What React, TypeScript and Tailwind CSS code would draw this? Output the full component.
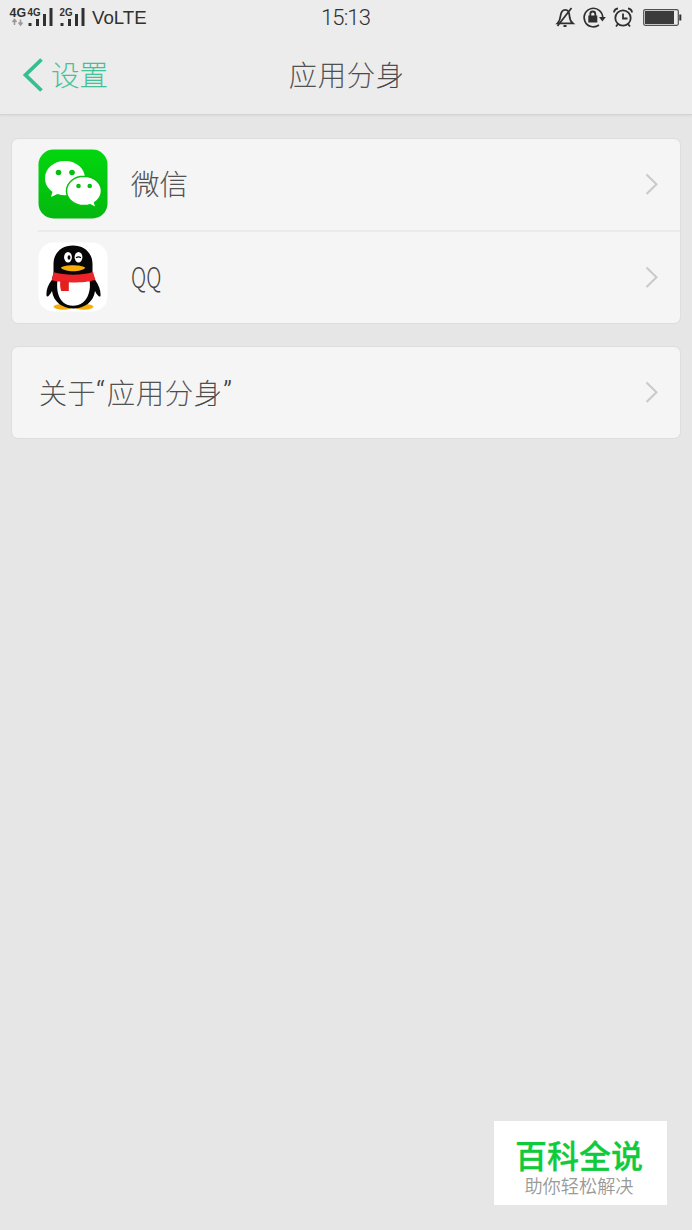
import type { ReactNode } from 'react';

const CJK = "font-['Noto_Sans_CJK_SC',sans-serif]";

function SignalIcons() {
  return (
    <svg className="h-9 w-[90px] shrink-0" viewBox="0 0 90 36" fill="#303030">
      <g className="font-['Liberation_Sans',sans-serif] font-bold">
        <text x="9.5" y="17" fontSize="12" textLength="16.500" lengthAdjust="spacingAndGlyphs">4G</text>
        <text x="27.5" y="16" fontSize="10" textLength="13" lengthAdjust="spacingAndGlyphs">4G</text>
        <text x="59.5" y="16" fontSize="10" textLength="13" lengthAdjust="spacingAndGlyphs">2G</text>
      </g>
      <path d="M14.500 25v-5M12.500 22l2-2.500 2 2.500M20.500 19.500v5M18.500 22.500l2 2.500 2-2.500" fill="none" stroke="#999" strokeWidth="1.5" />
      <path d="M28.500 23h3v3h-3zM36 19h3v7h-3zM43 14h3v12h-3zM49.500 8h3v18h-3z" />
      <path d="M60.500 23h3v3h-3zM68 19h3v7h-3zM75 14h3v12h-3zM81.500 8h3v18h-3z" />
    </svg>
  );
}

function SystemIcons() {
  return (
    <svg className="h-9 w-[140px] shrink-0" viewBox="552 0 140 36" fill="none" stroke="#303030" strokeWidth="1.8">
      <path d="M557.500 23.300c2-2 2.700-4 3-7.300.5-4 2-6.200 4.800-6.200s4 2.200 4.200 6.200c.2 3.300.8 5.300 3.300 7.300zM557.500 26 571.500 8M563.500 26h3" />
      <path d="M599 25a9.300 9.300 0 1 1 3.700-7" strokeWidth="1.600" />
      <path d="M599 17h6.800l-3.400 4.500z" fill="#303030" stroke="none" />
      <path d="M588.300 15.500h9v7h-9z" fill="#303030" stroke="none" />
      <path d="M590.300 16.500v-2.500a2.500 2.500 0 0 1 5 0v2.500" />
      <circle cx="623" cy="18" r="7.700" />
      <path d="M623 13.500V18.500h4.500M614 12.500c.2-2.300 1.800-3.800 4-4M632 12.500c-.2-2.300-1.800-3.800-4-4M618 24l-2 2.500M628 24l2 2.500" />
      <rect x="643.700" y="9.700" width="34.600" height="15.600" rx="1.500" strokeWidth="1.200" stroke="#505050" />
      <path d="M645 11h29v13h-29z" fill="#3b3b3b" stroke="none" />
      <path d="M679.300 14.500h2v6h-2z" fill="#303030" stroke="none" />
    </svg>
  );
}

function WeChatIcon() {
  return (
    <svg className="size-[70px] shrink-0" viewBox="0 0 70 70">
      <defs>
        <linearGradient id="wechat" x1="0" y1="0" x2="0" y2="1">
          <stop offset="0" stopColor="#02d70e" />
          <stop offset="1" stopColor="#04b80f" />
        </linearGradient>
      </defs>
      <rect x=".5" y=".5" width="69" height="69" rx="15" fill="url(#wechat)" />
      <path d="M27 12C15.500 12 7 19.500 7 29.300c0 5.700 2.700 10.100 7.500 13.500L13 48l6.500-3c2.500.8 5 1.200 7.500 1.200 11.500 0 20-7.500 20-17S38.500 12 27 12z" fill="#fff" />
      <path d="M46 27.200c-9.700 0-17.500 6.600-17.500 14.700s7.800 14.700 17.500 14.700c2.300 0 4.200-.3 6.200-.9l6.100 3.100-1.700-5.100c4-3 6.900-7 6.900-11.800 0-8.100-7.800-14.700-17.500-14.700z" fill="#fff" stroke="#05c20f" strokeWidth="1.500" />
      <g fill="#05c10f">
        <circle cx="20.500" cy="23.500" r="2.800" />
        <circle cx="34" cy="23.500" r="2.800" />
        <circle cx="40.500" cy="37" r="2.300" />
        <circle cx="51.700" cy="37" r="2.300" />
      </g>
    </svg>
  );
}

function QQIcon() {
  return (
    <svg className="size-[70px] shrink-0" viewBox="0 0 70 70">
      <rect x=".5" y=".5" width="69" height="69" rx="15" fill="#fff" />
      <ellipse cx="25" cy="64.800" rx="9.500" ry="2.900" fill="#f5ad0c" />
      <ellipse cx="46" cy="64.800" rx="9.500" ry="2.900" fill="#f5ad0c" />
      <path d="M15.500 31V22C15.500 11 23.500 3.500 34.900 3.500S54.500 11 54.500 22v9l2.700 7c4 6 5.800 11 5.300 16-.8 1.500-3.300-.3-5.500-5C55.500 60 46.500 66.500 35.500 66.500S15.500 60 14 49c-2.200 4.500-4.700 6.500-5.400 5-.8-5 1.200-11 5.200-16z" fill="#060606" />
      <path d="M19.500 38h32c.8 5 .5 10-1 14-2.500 7.500-8 11.800-15.500 11.800S22.500 59.500 20.200 52c-1.200-4-1.300-9-.7-14z" fill="#fff" />
      <path d="M15.500 30.300c6 1.700 12.500 2.400 19.500 2.400 7.500 0 14.500-.9 20-2.700l2.400 7.900c-7 1.800-13.400 2.400-22.400 2.500-8 0-15.500-.6-21.200-2.100z" fill="#ec2328" />
      <path d="M22.300 38.500h8.500V49h-7.700c-1-3.500-1.200-7-.8-10.500z" fill="#e3201f" />
      <ellipse cx="30" cy="15.200" rx="3.900" ry="5.300" fill="#fff" />
      <ellipse cx="40.500" cy="15.200" rx="3.900" ry="5.300" fill="#fff" />
      <ellipse cx="31" cy="15.500" rx="1.400" ry="2.300" fill="#060606" />
      <path d="M38 15.700q2.500-1.700 5 0" fill="none" stroke="#060606" strokeWidth="1.300" />
      <path d="M22.800 25.800c2.500-3.400 21.500-3.400 24.500 0-3 4.600-21 4.600-24.500 0z" fill="#f5ad0c" />
    </svg>
  );
}

function Chevron() {
  return (
    <svg className="ml-auto mr-[21px] h-6 w-3.5 shrink-0" viewBox="0 0 14 24" fill="none" stroke="#c9c9c9" strokeWidth="2">
      <path d="m1.500 2.500 10 9.800-10 9.700" />
    </svg>
  );
}

function Card({ children }: { children: ReactNode }) {
  return <section className="rounded-[6px] bg-[#f5f5f5] shadow-[0_0_0_1px_#dedede]">{children}</section>;
}

export default function App() {
  return (
    <div className={`flex h-[1230px] w-[692px] flex-col overflow-hidden bg-[#e6e6e6] text-[#444] ${CJK}`}>
      <header className="h-[115px] shrink-0 border-b border-[#d4d4d4] bg-[#ececec] shadow-[0_1px_2px_#d9d9d9]">
        <div className="grid h-9 grid-cols-[1fr_auto_1fr] items-center font-['Roboto',sans-serif] leading-9 text-[#303030]">
          <div className="flex items-center">
            <SignalIcons />
            <span className="ml-0.5 font-['Liberation_Sans',sans-serif] text-[18.7px] leading-9">VoLTE</span>
          </div>
          <time className="pr-px text-[22px] font-light tracking-[-0.9px]">15:13</time>
          <div className="flex justify-end"><SystemIcons /></div>
        </div>
        <div className="grid h-[78px] grid-cols-[1fr_auto_1fr] items-center leading-none">
          <div className="flex items-center pl-[22px] text-[#35bf91]">
            <svg className="h-9 w-[22px]" viewBox="0 0 22 36" fill="none" stroke="currentColor" strokeWidth="3.800">
              <path d="M19.500 2.500 3.500 18l16 15.500" />
            </svg>
            <span className="ml-[7px] pb-0.5 text-[28.5px] font-thin [-webkit-text-stroke:0.35px_currentColor]">设置</span>
          </div>
          <h1 className="pb-0.5 pl-0.5 text-[28px] font-thin tracking-[1px] [-webkit-text-stroke:0.35px_currentColor]">应用分身</h1>
          <span />
        </div>
      </header>

      <main className="flex flex-col gap-6 px-3 pt-6">
        <Card>
          <div className="flex h-[91px] items-center pb-0.5 pl-[26px]">
            <WeChatIcon />
            <span className="ml-[23px] text-[28.5px] font-thin leading-none [-webkit-text-stroke:0.35px_currentColor]">微信</span>
            <Chevron />
          </div>
          <div className="ml-[26px] h-0.5 bg-[#ebebeb]" />
          <div className="flex h-[91px] items-center pb-0.5 pl-[26px]">
            <QQIcon />
            <span className="ml-[23px] origin-left scale-x-[0.72] pb-[3px] text-[29px] font-light leading-none">QQ</span>
            <Chevron />
          </div>
        </Card>
        <Card>
          <div className="flex h-[91px] items-center pb-px pl-[27px]">
            <span className="flex items-center pb-px text-[28px] font-thin leading-none [-webkit-text-stroke:0.35px_currentColor]">
              <span className="tracking-[0.5px]">关于</span>
              <span className="w-[11px] font-['Roboto',sans-serif] text-[30px] font-light [-webkit-text-stroke:0px]">“</span>
              <span className="tracking-[1px]">应用分身</span>
              <span className="font-['Roboto',sans-serif] text-[30px] font-light [-webkit-text-stroke:0px]">”</span>
            </span>
            <Chevron />
          </div>
        </Card>
      </main>

      <aside className="mb-[25px] mr-[25px] mt-auto flex h-[84px] w-[173px] flex-col items-center self-end bg-white pr-[3px] pt-[17px] leading-none">
        <strong className="text-[32px] font-medium text-[#0fcb3c] [-webkit-text-stroke:0.3px_#0fcb3c]">百科全说</strong>
        <span className="mt-[6px] text-[18.2px] font-[350] text-[#999]">助你轻松解决</span>
      </aside>
    </div>
  );
}
